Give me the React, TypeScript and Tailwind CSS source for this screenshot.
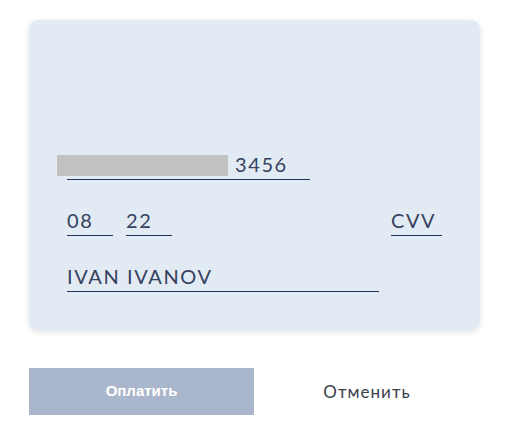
import React from "react";

export default function App() {
  const font = { fontFamily: "Lato, 'Noto Sans', sans-serif" };
  return (
    <div className="w-[508px] h-[432px] bg-white" style={font}>
      <div className="pt-[20px] pl-[29px]">
        <div className="w-[451px] h-[310px] rounded-[9px] bg-[#e2ebf3] shadow-[0_2px_6px_rgba(0,0,0,0.12)] pl-[38px] pt-[132px] flex flex-col gap-[28px] text-[#34415f] text-[20px] font-normal tracking-[1.6px]">
          <div className="relative w-[243px] h-[28px] border-b border-[#1f3156] pl-[168px] leading-[24px]">
            3456
            <div className="absolute left-[-10px] top-[3px] w-[171px] h-[21px] bg-[#c2c2c2]" />
          </div>
          <div className="flex h-[28px]">
            <div className="w-[46px] border-b border-[#1f3156] leading-[24px]">08</div>
            <div className="w-[46px] ml-[13px] border-b border-[#1f3156] leading-[24px]">22</div>
            <div className="w-[51px] ml-[219px] border-b border-[#1f3156] leading-[24px]">CVV</div>
          </div>
          <div className="w-[312px] h-[28px] border-b border-[#1f3156] leading-[24px]">IVAN IVANOV</div>
        </div>
        <div className="flex mt-[38px] w-[451px]">
          <button className="w-[225px] h-[47px] bg-[#aab6cb] text-white text-[15px] font-bold" style={{ fontFamily: "'Liberation Sans', Arial, sans-serif" }}>
            Оплатить
          </button>
          <button className="w-[226px] h-[47px] text-[#3a404c] text-[17px] font-normal tracking-[1px]">
            Отменить
          </button>
        </div>
      </div>
    </div>
  );
}
